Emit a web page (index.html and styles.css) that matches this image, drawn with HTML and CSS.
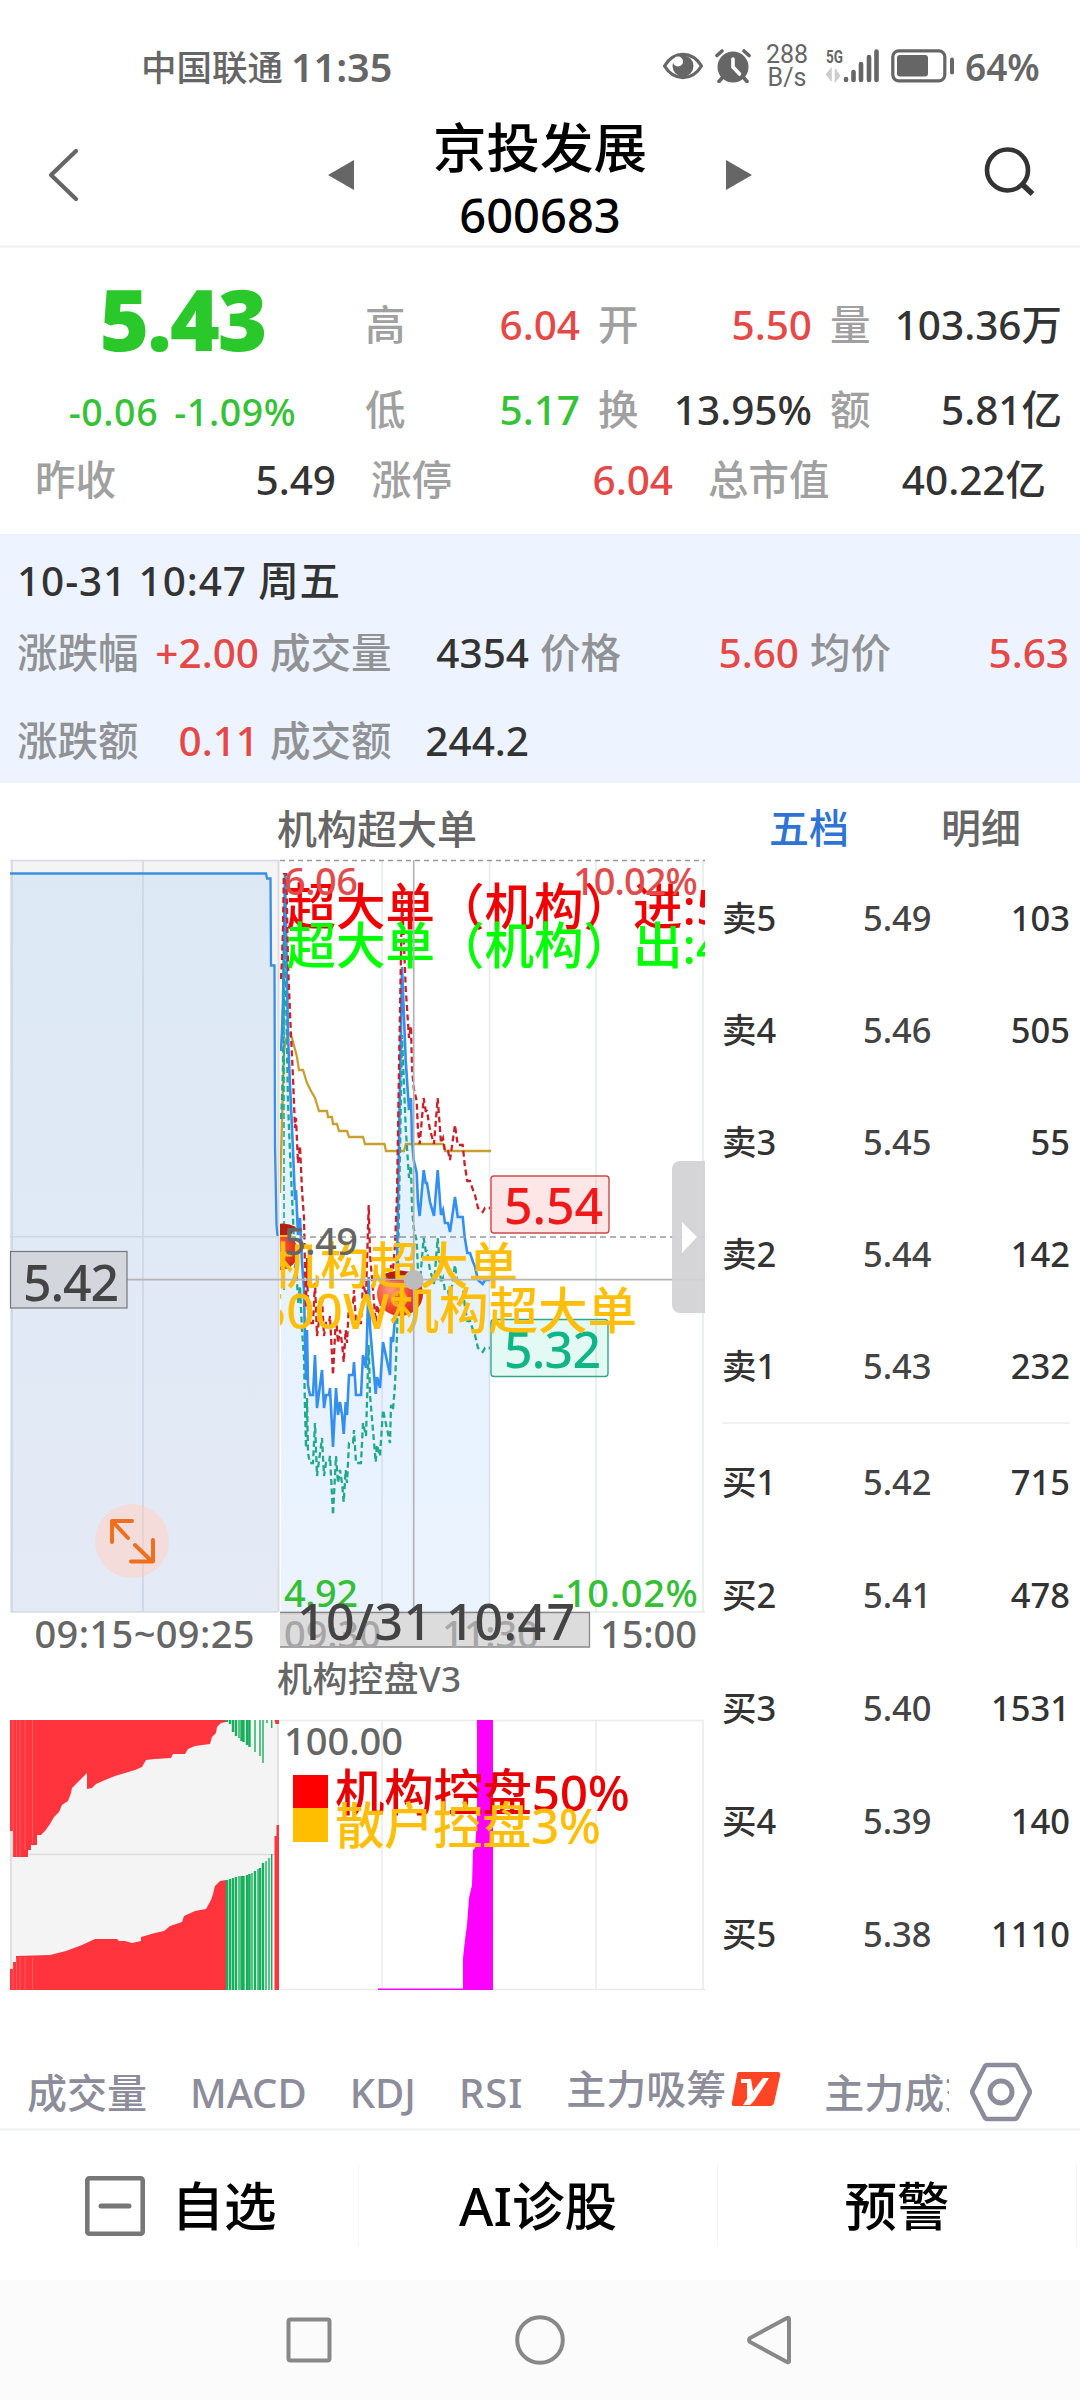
FILE: index.html
```html
<!DOCTYPE html>
<html lang="zh-CN">
<head>
    <meta charset="UTF-8">
    <title>京投发展 600683</title>
    <link rel="stylesheet" href="styles.css">
</head>
<body>
    <div class="status">
        <div class="carrier"><span class="cn">中国联通</span><span>11:35</span></div>
        <div class="status-right">
            <svg class="i-eye" width="42" height="30" viewBox="0 0 42 30">
                <path d="M2.500 15C12-.5 30-.5 39.500 15C30 30.500 12 30.500 2.500 15Z" fill="none" stroke="#666" stroke-width="3.200" stroke-linejoin="round"/>
                <circle cx="21" cy="15" r="10.500" fill="#666"/>
                <circle cx="16" cy="10.500" r="5" fill="#fff"/>
            </svg>
            <svg class="i-alarm" width="36" height="34" viewBox="0 0 36 34">
                <circle cx="18" cy="18" r="15.500" fill="#666"/>
                <path d="M2 6.500L7 2M34 6.500L29 2M7 29L4 32.500M29 29L32 32.500" stroke="#666" stroke-width="3.600" stroke-linecap="round"/>
                <path d="M18 10V18L24.500 25" fill="none" stroke="#fff" stroke-width="3.600" stroke-linecap="round"/>
            </svg>
            <div class="speed">288<br>B/s</div>
            <svg class="i-signal" width="54" height="36" viewBox="0 0 54 36">
                <text x="0" y="15" class="g5" textLength="17" lengthAdjust="spacingAndGlyphs">5G</text>
                <path d="M0 27L5 21V33M9.500 21V33L14 27" fill="#ccc" stroke="#ccc" stroke-width="1.500"/>
                <path d="M20 32V31M27.500 32V24M35 32V16M43 32V9M50.500 32V3.500" stroke="#666" stroke-width="4.600" stroke-linecap="round"/>
            </svg>
            <svg class="i-battery" width="64" height="34" viewBox="0 0 64 34">
                <rect x="1.800" y="1.800" width="52" height="30" rx="6" fill="none" stroke="#666" stroke-width="3.200"/>
                <rect x="6" y="6" width="31" height="21.500" rx="3" fill="#666"/>
                <rect x="59" y="8.500" width="4" height="17" rx="2" fill="#666"/>
            </svg>
            <span class="percent">64%</span>
        </div>
    </div>

    <div class="header">
        <svg class="back" width="36" height="60" viewBox="0 0 36 60"><path d="M31 6L6 30L31 54" fill="none" stroke="#666" stroke-width="4.200" stroke-linecap="round" stroke-linejoin="round"/></svg>
        <svg class="prev" width="26" height="32" viewBox="0 0 26 32"><path d="M26 1V31L0 16Z" fill="#666"/></svg>
        <div class="title">
            <div class="name">京投发展</div>
            <div class="code">600683</div>
        </div>
        <svg class="next" width="26" height="32" viewBox="0 0 26 32"><path d="M0 1V31L26 16Z" fill="#666"/></svg>
        <svg class="search" width="54" height="54" viewBox="0 0 54 54"><circle cx="25.500" cy="26" r="20.500" fill="none" stroke="#333" stroke-width="4.600"/><path d="M40 40L50.500 50" stroke="#333" stroke-width="5.500"/></svg>
    </div>

    <div class="quote">
        <div class="quote-top">
            <div class="price">
                <div class="last">5.43</div>
                <div class="change"><span>-0.06</span><span>-1.09%</span></div>
            </div>
            <div class="grid">
                <div><label>高</label><b class="up">6.04</b></div>
                <div><label>开</label><b class="up">5.50</b></div>
                <div><label>量</label><b>103.36万</b></div>
                <div><label>低</label><b class="down">5.17</b></div>
                <div><label>换</label><b>13.95%</b></div>
                <div><label>额</label><b>5.81亿</b></div>
            </div>
        </div>
        <div class="quote-row">
            <div><label>昨收</label><b>5.49</b></div>
            <div><label>涨停</label><b class="up">6.04</b></div>
            <div><label>总市值</label><b>40.22亿</b></div>
        </div>
    </div>

    <div class="cursor-info">
        <div class="date">10-31 10:47 周五</div>
        <div class="info-row">
            <div><label>涨跌幅</label><b class="up">+2.00</b></div>
            <div><label>成交量</label><b>4354</b></div>
            <div><label>价格</label><b class="up">5.60</b></div>
            <div><label>均价</label><b class="up">5.63</b></div>
        </div>
        <div class="info-row second">
            <div><label>涨跌额</label><b class="up">0.11</b></div>
            <div><label>成交额</label><b>244.2</b></div>
        </div>
    </div>

    <div class="main">
        <div class="charts">
            <div class="chart-title">机构超大单</div>
            <svg class="chart" width="705" height="1136" viewBox="0 858 705 1136">
                <defs>
                    <clipPath id="right"><rect x="280" y="858" width="425" height="800"/></clipPath>
                    <clipPath id="lines"><rect x="280" y="873" width="425" height="739"/></clipPath>
                    <linearGradient id="fillL" x1="0" y1="0" x2="0" y2="1"><stop offset="0" stop-color="#dce9f5"/><stop offset="1" stop-color="#e4eaf6"/></linearGradient>
                    <linearGradient id="fillR" x1="0" y1="0" x2="0" y2="1"><stop offset="0" stop-color="#e0f1fc"/><stop offset="1" stop-color="#ebf3ff"/></linearGradient>
                    <radialGradient id="bag" cx=".3" cy=".4" r=".8"><stop offset="0" stop-color="#ff9a80"/><stop offset=".5" stop-color="#f4472e"/><stop offset="1" stop-color="#c3200f"/></radialGradient>
                    <path id="price" d="M281 1051L282 1031L283 1000L285 873L288 1035L290 1085L293 1150L295 1200L296 1190L298 1235L300 1218L302 1262L304 1290L305 1340L306 1380L307 1330L308 1385L310 1395H313L315 1355L317 1408L322 1370L324 1408L326 1395H329L330 1388L333 1447L336 1388L338 1415L340 1402L342 1415L343.700 1434L345.700 1402L347 1415L349 1375H353L354 1362L356 1395H361L363 1355L366 1368L368.700 1277L370 1327L375.700 1394L377 1377L380 1388L383 1342L390 1375L391 1337L393 1342L395 1317L397 1267L399 1140L402 967L405.700 1060L409 1110L411 1098L412 1140L413.700 1160L416.700 1173L418 1203L419.700 1216L423.700 1170L425.700 1183H427L430 1202L434 1216L437.700 1170L441 1215L443 1210L445 1223H448L450 1232L455 1197L457.700 1217H462.700L464.700 1237L467.300 1253H470L473 1262L475 1267L478 1280L482.700 1284L485 1280H490"/>
                </defs>

                <!-- call auction panel -->
                <rect x="10" y="860" width="269" height="752" fill="#f4f4f4"/>
                <path d="M10 873.500H266L267 878.500H271L272 965.500H274.500L275.500 1145L277 1225L278 1236V1612H10Z" fill="url(#fillL)"/>
                <path d="M10 860.500H278M12 860V1612M143 860V1612M10 1236.700H278M10 1612H278" fill="none" stroke="#c5cddb" stroke-opacity=".7" stroke-width="1.600"/>
                <path d="M278.500 860V1612" stroke="#dcdcdf" stroke-width="2"/>
                <path d="M10 873.500H266L267 878.500H270.500L271 965.500H274.500L275 1145L276.500 1225L277.500 1236" fill="none" stroke="#3b8fe0" stroke-width="2.300"/>
                <circle cx="132" cy="1541" r="37" fill="#f3dcd9"/>
                <path d="M143 1504V1578" stroke="#e6d0d0" stroke-width="1.600"/>
                <path d="M112 1542V1521H132M112 1521L128 1538M135 1545L152 1561.500M153 1540V1561.500H131" fill="none" stroke="#ee701d" stroke-width="4" stroke-linecap="round" stroke-linejoin="round"/>

                <!-- intraday panel -->
                <g clip-path="url(#lines)">
                    <path d="M281 1612V1051L282 1031L285 873L288 1035L293 1150L298 1235L304 1290L306 1380L310 1395H313L315 1355L317 1408L322 1370L324 1408L330 1388L333 1447L336 1388L338 1415L343.700 1434L349 1375H353L356 1395H361L366 1365L368.700 1277L375.700 1394L383 1342L390 1375L397 1267L399 1140L402 967L409 1110L412 1140L419.700 1216L423.700 1170L434 1216L437.700 1170L441 1215L450 1232L455 1197L462.700 1217L467.300 1253L478 1280H490V1612Z" fill="url(#fillR)"/>
                </g>
                <path d="M382 860V1612M489.500 860V1612M596 860V1612M703 860V1612M280 1612H705" stroke="#9aa" stroke-opacity=".22" stroke-width="1.700"/>
                <path d="M280 860.500H705" stroke="#999" stroke-width="1.300" stroke-dasharray="5 4"/>
                <g clip-path="url(#lines)" fill="none" stroke-width="2.300">
                    <path d="M280 1193L282 1120L284 1050L288 1032L292 1038L297 1057L299 1070H303L307 1083L311 1091L315 1098L319 1111H327L328 1117H332L333 1124H337L339 1131H347L349 1137H363L365 1144H384.500L386 1151H404L406 1144H443L445 1151H491" stroke="#c8a030"/>
                    <use href="#price" y="68" stroke="#20a98a" stroke-dasharray="6 3.500"/>
                    <use href="#price" stroke="#3390ee" stroke-width="2.600"/>
                    <use href="#price" y="-72" stroke="#cc2029" stroke-dasharray="6 3.500"/>
                    <path d="M284 1290V933" stroke="#20a98a" stroke-width="1.600" stroke-dasharray="6 3"/>
                </g>
                <path d="M280 1237H705" stroke="#999" stroke-width="1.600" stroke-dasharray="6 4"/>
                <g clip-path="url(#right)">
                    <g class="bag">
                        <ellipse cx="280" cy="1252" rx="18" ry="18" fill="url(#bag)"/>
                        <path d="M270 1227Q283 1220 296 1227L290 1236H272Z" fill="#b3200f"/>
                        <path d="M276 1236H292" stroke="#ffbe0a" stroke-width="2"/>
                        <ellipse cx="400" cy="1294" rx="23" ry="22" fill="url(#bag)"/>
                        <path d="M384 1274Q400 1267 416 1274L408 1281H390Z" fill="#b3200f"/>
                        <circle cx="399" cy="1299" r="8.500" fill="#f5a623"/>
                        <path d="M395 1297H403M395 1301H403M399 1294V1304" stroke="#e0502a" stroke-width="1.300"/>
                    </g>
                    <g class="big">
                        <text x="286.500" y="924.500" fill="#f00000">超大单（机构）进:5</text>
                        <text x="286.500" y="963.500" fill="#0f0">超大单（机构）出:4</text>
                        <text x="518" y="1284" fill="#ffbe0a" text-anchor="end">机构超大单</text>
                    </g>
                </g>
                <rect x="491" y="1176" width="118" height="57" rx="3" fill="#ffe6e6" stroke="#c9494c" stroke-width="1.400"/>
                <rect x="491" y="1319.500" width="117" height="57" rx="3" fill="#e3f9f3" stroke="#35a58c" stroke-width="1.400"/>
                <path d="M596 1177V1232M596 1320V1376" stroke="#999" stroke-opacity=".2" stroke-width="1.700"/>
                <g class="tag">
                    <text x="504" y="1224" fill="#f01818" textLength="99">5.54</text>
                    <text x="504" y="1368" fill="#0fb587" textLength="97">5.32</text>
                </g>
                <g clip-path="url(#right)" class="big"><text x="637" y="1329" fill="#ffbe0a" text-anchor="end">500W机构超大单</text></g>
                <g class="axis">
                    <text x="284" y="895" fill="#e14b4b" textLength="74">6.06</text>
                    <text x="573" y="895" fill="#e14b4b" textLength="125">10.02%</text>
                    <text x="284" y="1255" textLength="74">5.49</text>
                    <text x="284" y="1607" fill="#36bf36" textLength="74">4.92</text>
                    <text x="552" y="1607" fill="#36bf36" textLength="146">-10.02%</text>
                    <text x="34.500" y="1648" textLength="220">09:15~09:25</text>
                    <text x="600" y="1648" textLength="97">15:00</text>
                </g>
                <path d="M127 1279.700H705M413.700 860V1612" stroke="#b4b4b4" stroke-width="1.700"/>
                <circle cx="413.700" cy="1280" r="10" fill="#bcbcbc"/>
                <rect x="10.500" y="1251.500" width="116.500" height="56.500" fill="#d3d6dc" stroke="#777" stroke-width="1.200"/>
                <g class="tag"><text x="23" y="1301" fill="#444" textLength="96">5.42</text></g>
                <path d="M280 1612.500H589.500V1647H280Z" fill="#dcdcdc"/>
                <path d="M280 1612.500H589.500V1647H280" fill="none" stroke="#888" stroke-width="1.300"/>
                <g class="axis muted">
                    <text x="284" y="1648" textLength="97">09:30</text>
                    <text x="442" y="1648" textLength="97">11:30</text>
                </g>
                <g class="tag"><text x="297" y="1640" fill="#444" textLength="278">10/31 10:47</text></g>
                <path d="M705 1161H680A8 8 0 0 0 672 1169V1305A8 8 0 0 0 680 1313H705Z" fill="#d2d2d6" fill-opacity=".94"/>
                <path d="M682 1222V1253L697 1237Z" fill="#fff"/>

                <!-- indicator -->
                <text class="sub" x="277" y="1692" textLength="184">机构控盘V3</text>
                <rect x="10" y="1720" width="269" height="270" fill="#f4f4f4"/>
                <path d="M10 1854.500H278M11 1720V1990M278 1720V1990" stroke="#dcdcdc" stroke-width="1.600"/>
                <path d="M280 1720.500H704M382 1720V1990M489.500 1720V1990M596 1720V1990M703 1720V1990M280 1989.500H705" stroke="#ebebeb" stroke-width="1.600"/>
                <path d="M10 1720V1831H13V1857H20V1857H28V1850H31V1845H37V1835H41L45 1831L50 1824L54 1817L59 1812L62 1805L68 1801L71 1793L72 1788L77 1783L84 1776L87 1773V1789L92 1788L96 1784L105 1780L115 1776L125 1773L135 1770L142 1767L146 1760L155 1759L171 1758L173 1754H185L188 1749L195 1746L210 1744L212 1737L216 1733L217 1727L221 1723L226 1722V1720Z" fill="#ff343c"/>
                <path d="M10 1990V1969H13V1962H16V1956L50 1955L66 1951L82 1945L95 1939H117L119 1941H125L132 1943L141 1941V1937L155 1933L164 1931L170 1926L182 1922L184 1916L195 1911L206 1909L211 1900L213 1894L215 1886L220 1881L226 1880V1990ZM274.500 1990V1836H276.500V1825H279V1990ZM274.500 1720H279V1724H275.500Z" fill="#ff343c"/>
                <path d="M13 1720V1857M16.500 1720V1857M20 1720V1857M25 1720V1850M32.500 1720V1843M13 1965V1990M16.500 1958V1990M20 1957V1990M25 1957V1990M32.500 1957V1990" stroke="#ff8084" stroke-width=".5"/>
                <g stroke="#16b05c">
                    <path stroke-width="2.400" d="M227 1880V1990M230 1879V1990M233 1878V1990M236 1877V1990M241.500 1876V1990M243.500 1876V1990M247 1875V1990M249.500 1874V1990M255 1871V1990M260 1868V1990M263 1863V1990"/>
                    <path stroke-width="1.400" d="M239 1876V1990M252 1873V1990M258 1869V1990M266 1861V1990M269 1858V1990M271.700 1854V1990"/>
                    <path stroke-width="2.400" d="M227 1720V1722M230 1720V1724M233 1720V1732M236 1720V1736M241.500 1720V1741M243.500 1720V1742M247 1720V1745M249.500 1720V1747"/>
                    <path stroke-width="1.400" d="M239 1720V1738M255 1720V1752M260 1720V1756M263 1720V1763M267 1720V1723M271.700 1720V1728"/>
                </g>
                <path d="M378 1990V1988.500H463V1958L465 1940L467 1925L469 1898L472 1885L473 1850L475 1848L477 1820V1720H493V1990Z" fill="#f0f"/>
                <text class="hundred" x="284" y="1755" textLength="119">100.00</text>
                <rect x="293" y="1775" width="35" height="33" fill="red"/>
                <rect x="293" y="1808" width="35" height="34" fill="#ffbe00"/>
                <g class="big">
                    <text x="335" y="1811" fill="#e80000" textLength="295">机构控盘50%</text>
                    <text x="335" y="1844" fill="#ffbe0a" textLength="266">散户控盘3%</text>
                </g>
            </svg>
        </div>

        <div class="book">
            <div class="book-tabs"><span class="active">五档</span><span>明细</span></div>
            <div class="level"><span>卖5</span><span>5.49</span><b>103</b></div>
            <div class="level"><span>卖4</span><span>5.46</span><b>505</b></div>
            <div class="level"><span>卖3</span><span>5.45</span><b>55</b></div>
            <div class="level"><span>卖2</span><span>5.44</span><b>142</b></div>
            <div class="level"><span>卖1</span><span>5.43</span><b>232</b></div>
            <hr>
            <div class="level buy"><span>买1</span><span>5.42</span><b>715</b></div>
            <div class="level buy"><span>买2</span><span>5.41</span><b>478</b></div>
            <div class="level buy"><span>买3</span><span>5.40</span><b>1531</b></div>
            <div class="level buy"><span>买4</span><span>5.39</span><b>140</b></div>
            <div class="level buy"><span>买5</span><span>5.38</span><b>1110</b></div>
        </div>
    </div>

    <div class="indicators">
        <div class="indicator-list">
            <span>成交量</span><span>MACD</span><span>KDJ</span><span>RSI</span>
            <span class="vip">主力吸筹<svg width="50" height="36" viewBox="0 0 50 36"><path d="M8 1H47Q50 1 49 5L43 32Q42 35 39 35H3Q0 35 1 31L6 4Q6 1 8 1Z" fill="#ff4524"/><path d="M10 8H20L22 20L32 7H38L23 30L19 34H12L16 28V12H10Z" fill="#fff"/></svg></span>
            <span>主力成交</span>
        </div>
        <svg class="setting" width="64" height="60" viewBox="0 0 64 60"><path d="M18.500 3H45.500Q47.500 3 48.500 5L60 27.500Q61.500 30 60 32.500L48.500 55Q47.500 57 45.500 57H18.500Q16.500 57 15.500 55L4 32.500Q2.500 30 4 27.500L15.500 5Q16.500 3 18.500 3Z" fill="none" stroke="#8c8c9a" stroke-width="4.600"/><circle cx="32" cy="30" r="11" fill="none" stroke="#8c8c9a" stroke-width="5"/></svg>
    </div>

    <div class="actions">
        <div><svg width="60" height="60" viewBox="0 0 60 60"><rect x="2.300" y="2.300" width="55.400" height="55.400" rx="2" fill="none" stroke="#777" stroke-width="4.600"/><path d="M16 30H44" stroke="#777" stroke-width="5" stroke-linecap="round"/></svg><strong>自选</strong></div>
        <div>AI诊股</div>
        <div>预警</div>
    </div>

    <div class="nav">
        <svg width="50" height="50" viewBox="0 0 50 50"><rect x="4.500" y="4.500" width="41" height="41" rx="2" fill="none" stroke="#888" stroke-width="4"/></svg>
        <svg width="50" height="50" viewBox="0 0 50 50"><circle cx="25" cy="25" r="22.800" fill="none" stroke="#888" stroke-width="4"/></svg>
        <svg width="50" height="50" viewBox="0 0 50 50"><path d="M43 4V46Q43 48 41 47L4 27Q2 25 4 23L41 3Q43 2 43 4Z" fill="none" stroke="#888" stroke-width="4"/></svg>
    </div>
</body>
</html>
```

FILE: styles.css
```css
* {
    box-sizing: border-box;
}
body {
    margin: 0;
    width: 1080px;
    height: 2400px;
    overflow: hidden;
    background: #fff;
    color: #333;
    font-family: 'Noto Sans', 'Noto Sans CJK SC', sans-serif;
    font-size: 40.5px;
    font-weight: 500;
}
svg {
    display: block;
    flex: none;
}
b {
    font-weight: 500;
}
label {
    color: #a0a0a0;
}
.up { color: #e54847; }
.down { color: #36c236; }

/* status bar */
.status {
    height: 120px;
    padding: 14px 42px 0 141px;
    display: flex;
    justify-content: space-between;
    align-items: center;
    color: #666;
    line-height: 50px;
}
.carrier {
    display: flex;
    gap: 8px;
    font-size: 39.5px;
    font-weight: 600;
}
.carrier .cn {
    font-size: 35.5px;
    font-weight: 500;
}
.status-right {
    display: flex;
    align-items: center;
}
.i-eye { margin-top: -3px; }
.i-alarm { margin: -3px 0 0 11px; }
.speed {
    width: 42px;
    margin: -3px 0 0 15px;
    text-align: center;
    font: 400 25px/23px Roboto, sans-serif;
}
.i-signal { margin: -3px 0 0 18px; }
.g5 {
    font: 700 19px Roboto, sans-serif;
    fill: #666;
}
.i-battery { margin: -3px 0 0 11px; }
.percent {
    width: 73px;
    margin-left: 10px;
    font-size: 37px;
    font-weight: 600;
}

/* header */
.header {
    height: 130px;
    margin-top: -2px;
    padding: 0 44px 0 45px;
    border-bottom: 3px solid #f4f4f4;
    display: flex;
    align-items: flex-start;
    color: #000;
}
.back { margin-top: 27px; }
.prev { margin: 41px 0 0 247px; }
.title {
    width: 372px;
    text-align: center;
}
.name {
    font-size: 53.5px;
    line-height: 60px;
}
.code {
    font-size: 47px;
    line-height: 58px;
    margin-top: 8px;
}
.next { margin-top: 41px; }
.search { margin: 26px 0 0 230px; }

/* quote */
.quote {
    height: 286px;
    padding-top: 36px;
}
.quote-top {
    display: flex;
    height: 162px;
}
.price {
    width: 365px;
    text-align: center;
}
.last {
    color: #2ac82b;
    font-size: 85px;
    font-weight: 900;
    line-height: 68px;
    letter-spacing: -2px;
}
.change {
    margin-top: 35px;
    display: flex;
    justify-content: center;
    gap: 16px;
    color: #36c236;
    font-size: 37.5px;
    letter-spacing: .6px;
    line-height: 50px;
}
.grid {
    width: 698px;
    display: grid;
    grid-template-columns: 215px 214px 232px;
    column-gap: 18px;
    row-gap: 35px;
    line-height: 50px;
    padding-top: 16px;
    align-content: start;
}
.grid div, .quote-row div, .info-row div {
    display: flex;
    justify-content: space-between;
}
.quote-row {
    display: grid;
    grid-template-columns: 301px 302px 338px;
    gap: 35px;
    padding-left: 35px;
    margin-top: 9px;
    line-height: 50px;
}

/* crosshair readout */
.cursor-info {
    height: 249px;
    background: #edf4ff;
    padding-top: 22px;
    line-height: 50px;
}
.cursor-info label { color: #909296; }
.date {
    padding-left: 17px;
    letter-spacing: .9px;
}
.info-row {
    display: grid;
    grid-template-columns: repeat(4, 270px);
    margin-top: 22px;
}
.info-row.second { margin-top: 38px; }
.info-row div { padding-right: 11px; }
.info-row div:first-child { padding-left: 17px; }

/* charts */
.main {
    display: flex;
    height: 1267px;
}
.charts { width: 705px; }
.chart-title {
    height: 75px;
    padding: 21px 0 0 277px;
    color: #666;
    font-size: 40px;
    line-height: 50px;
}
.big { font-size: 49.5px; }
.tag { font-size: 50px; }
.axis { font-size: 38px; fill: #666; }
.muted { fill: #a6a6a6; }
.sub { font-size: 35px; fill: #666; }
.hundred { font-size: 38px; fill: #666; }

/* order book */
.book {
    width: 375px;
    padding: 0 10px 0 17px;
}
.book-tabs {
    display: flex;
    padding: 20px 49px 0 47px;
    justify-content: space-between;
    line-height: 50px;
    height: 79px;
    font-size: 40px;
    color: #666;
}
.book-tabs .active { color: #2f74d4; }
.level {
    display: grid;
    grid-template-columns: 141px 80px 127px;
    height: 112px;
    line-height: 112px;
    font-size: 34.5px;
}
.level span:nth-child(2) { color: #444; }
.level b { text-align: right; }
.level.buy { height: 113px; }
.book hr {
    border: 0;
    height: 2px;
    margin: 0 0 2px;
    background: #f2f2f2;
}

/* indicator tabs */
.indicators {
    height: 81px;
    border-bottom: 3px solid #f3f4f5;
    display: flex;
    color: #8c8c9a;
}
.indicator-list {
    width: 949px;
    padding-left: 27px;
    overflow: hidden;
    display: flex;
    gap: 43px;
    white-space: nowrap;
    font-size: 40px;
    line-height: 86px;
}
.indicator-list span:nth-child(4) { letter-spacing: 1px; }
.vip {
    display: flex;
    align-items: center;
    gap: 5px;
}
.setting { margin: 12px 0 0 20px; }

/* bottom actions */
.actions {
    height: 149px;
    display: flex;
    align-items: center;
    color: #000;
    font-size: 52.5px;
    line-height: 85px;
}
.actions div {
    width: 359px;
    height: 81px;
    border-right: 1px solid #f4f4f4;
    display: flex;
    justify-content: center;
    align-items: center;
    gap: 26px;
}
.actions div:first-child { padding-left: 4px; }
.actions strong { font-weight: 500; }

.nav {
    height: 120px;
    background: #fbfbfb;
    display: flex;
    justify-content: center;
    align-items: center;
    gap: 181px;
}
```
